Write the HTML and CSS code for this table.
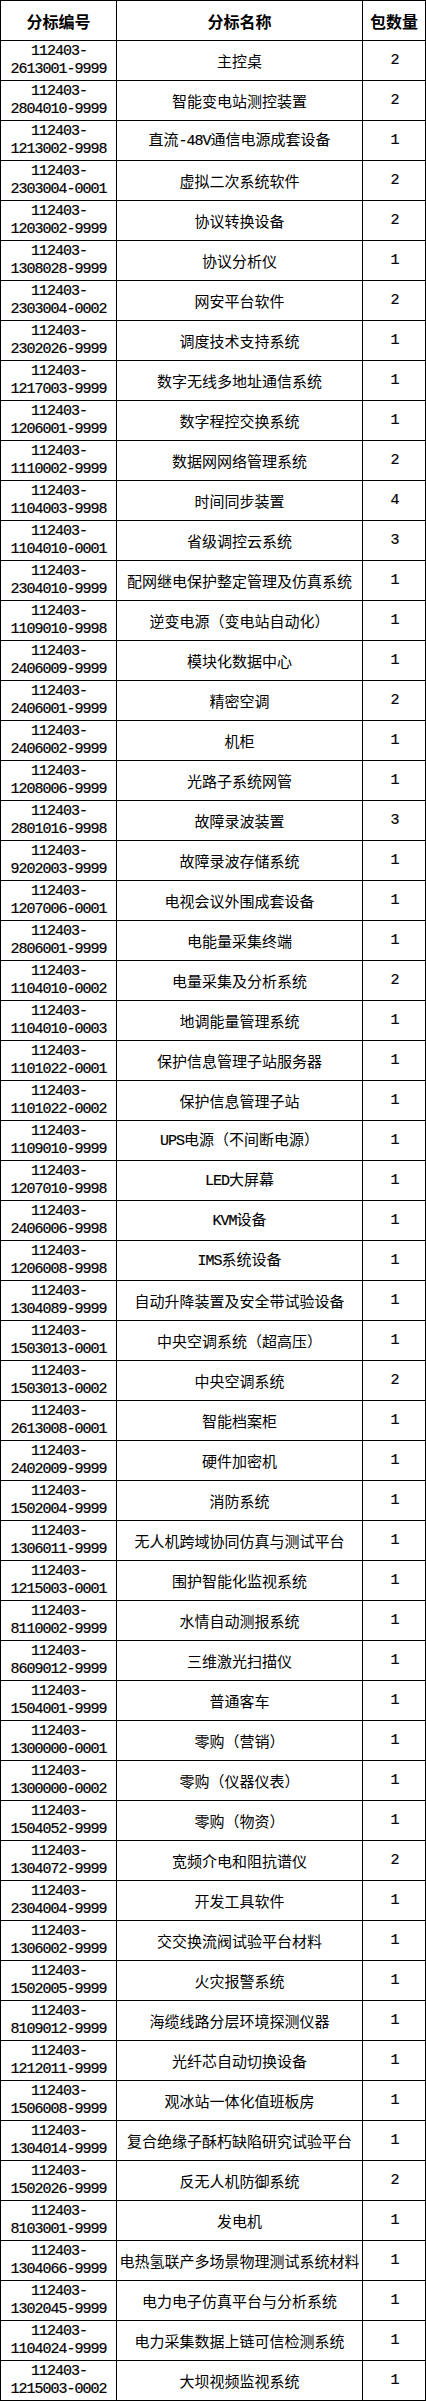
FILE: index.html
```html
<!DOCTYPE html>
<html lang="zh-CN">
<head>
<meta charset="utf-8">
<title>分标清单</title>
<link rel="stylesheet" href="styles.css">
</head>
<body>
<table class="lots">
<thead>
<tr><th class="c-code">分标编号</th><th class="c-name">分标名称</th><th class="c-qty">包数量</th></tr>
</thead>
<tbody>
<tr><td class="code">112403-<br>2613001-9999</td><td class="name">主控桌</td><td class="qty">2</td></tr>
<tr><td class="code">112403-<br>2804010-9999</td><td class="name">智能变电站测控装置</td><td class="qty">2</td></tr>
<tr><td class="code">112403-<br>1213002-9998</td><td class="name">直流<span class="en">-48V</span>通信电源成套设备</td><td class="qty">1</td></tr>
<tr><td class="code">112403-<br>2303004-0001</td><td class="name">虚拟二次系统软件</td><td class="qty">2</td></tr>
<tr><td class="code">112403-<br>1203002-9999</td><td class="name">协议转换设备</td><td class="qty">2</td></tr>
<tr><td class="code">112403-<br>1308028-9999</td><td class="name">协议分析仪</td><td class="qty">1</td></tr>
<tr><td class="code">112403-<br>2303004-0002</td><td class="name">网安平台软件</td><td class="qty">2</td></tr>
<tr><td class="code">112403-<br>2302026-9999</td><td class="name">调度技术支持系统</td><td class="qty">1</td></tr>
<tr><td class="code">112403-<br>1217003-9999</td><td class="name">数字无线多地址通信系统</td><td class="qty">1</td></tr>
<tr><td class="code">112403-<br>1206001-9999</td><td class="name">数字程控交换系统</td><td class="qty">1</td></tr>
<tr><td class="code">112403-<br>1110002-9999</td><td class="name">数据网网络管理系统</td><td class="qty">2</td></tr>
<tr><td class="code">112403-<br>1104003-9998</td><td class="name">时间同步装置</td><td class="qty">4</td></tr>
<tr><td class="code">112403-<br>1104010-0001</td><td class="name">省级调控云系统</td><td class="qty">3</td></tr>
<tr><td class="code">112403-<br>2304010-9999</td><td class="name">配网继电保护整定管理及仿真系统</td><td class="qty">1</td></tr>
<tr><td class="code">112403-<br>1109010-9998</td><td class="name">逆变电源（变电站自动化）</td><td class="qty">1</td></tr>
<tr><td class="code">112403-<br>2406009-9999</td><td class="name">模块化数据中心</td><td class="qty">1</td></tr>
<tr><td class="code">112403-<br>2406001-9999</td><td class="name">精密空调</td><td class="qty">2</td></tr>
<tr><td class="code">112403-<br>2406002-9999</td><td class="name">机柜</td><td class="qty">1</td></tr>
<tr><td class="code">112403-<br>1208006-9999</td><td class="name">光路子系统网管</td><td class="qty">1</td></tr>
<tr><td class="code">112403-<br>2801016-9998</td><td class="name">故障录波装置</td><td class="qty">3</td></tr>
<tr><td class="code">112403-<br>9202003-9999</td><td class="name">故障录波存储系统</td><td class="qty">1</td></tr>
<tr><td class="code">112403-<br>1207006-0001</td><td class="name">电视会议外围成套设备</td><td class="qty">1</td></tr>
<tr><td class="code">112403-<br>2806001-9999</td><td class="name">电能量采集终端</td><td class="qty">1</td></tr>
<tr><td class="code">112403-<br>1104010-0002</td><td class="name">电量采集及分析系统</td><td class="qty">2</td></tr>
<tr><td class="code">112403-<br>1104010-0003</td><td class="name">地调能量管理系统</td><td class="qty">1</td></tr>
<tr><td class="code">112403-<br>1101022-0001</td><td class="name">保护信息管理子站服务器</td><td class="qty">1</td></tr>
<tr><td class="code">112403-<br>1101022-0002</td><td class="name">保护信息管理子站</td><td class="qty">1</td></tr>
<tr><td class="code">112403-<br>1109010-9999</td><td class="name"><span class="en">UPS</span>电源（不间断电源）</td><td class="qty">1</td></tr>
<tr><td class="code">112403-<br>1207010-9998</td><td class="name"><span class="en">LED</span>大屏幕</td><td class="qty">1</td></tr>
<tr><td class="code">112403-<br>2406006-9998</td><td class="name"><span class="en">KVM</span>设备</td><td class="qty">1</td></tr>
<tr><td class="code">112403-<br>1206008-9998</td><td class="name"><span class="en">IMS</span>系统设备</td><td class="qty">1</td></tr>
<tr><td class="code">112403-<br>1304089-9999</td><td class="name">自动升降装置及安全带试验设备</td><td class="qty">1</td></tr>
<tr><td class="code">112403-<br>1503013-0001</td><td class="name">中央空调系统（超高压）</td><td class="qty">1</td></tr>
<tr><td class="code">112403-<br>1503013-0002</td><td class="name">中央空调系统</td><td class="qty">2</td></tr>
<tr><td class="code">112403-<br>2613008-0001</td><td class="name">智能档案柜</td><td class="qty">1</td></tr>
<tr><td class="code">112403-<br>2402009-9999</td><td class="name">硬件加密机</td><td class="qty">1</td></tr>
<tr><td class="code">112403-<br>1502004-9999</td><td class="name">消防系统</td><td class="qty">1</td></tr>
<tr><td class="code">112403-<br>1306011-9999</td><td class="name">无人机跨域协同仿真与测试平台</td><td class="qty">1</td></tr>
<tr><td class="code">112403-<br>1215003-0001</td><td class="name">围护智能化监视系统</td><td class="qty">1</td></tr>
<tr><td class="code">112403-<br>8110002-9999</td><td class="name">水情自动测报系统</td><td class="qty">1</td></tr>
<tr><td class="code">112403-<br>8609012-9999</td><td class="name">三维激光扫描仪</td><td class="qty">1</td></tr>
<tr><td class="code">112403-<br>1504001-9999</td><td class="name">普通客车</td><td class="qty">1</td></tr>
<tr><td class="code">112403-<br>1300000-0001</td><td class="name">零购（营销）</td><td class="qty">1</td></tr>
<tr><td class="code">112403-<br>1300000-0002</td><td class="name">零购（仪器仪表）</td><td class="qty">1</td></tr>
<tr><td class="code">112403-<br>1504052-9999</td><td class="name">零购（物资）</td><td class="qty">1</td></tr>
<tr><td class="code">112403-<br>1304072-9999</td><td class="name">宽频介电和阻抗谱仪</td><td class="qty">2</td></tr>
<tr><td class="code">112403-<br>2304004-9999</td><td class="name">开发工具软件</td><td class="qty">1</td></tr>
<tr><td class="code">112403-<br>1306002-9999</td><td class="name">交交换流阀试验平台材料</td><td class="qty">1</td></tr>
<tr><td class="code">112403-<br>1502005-9999</td><td class="name">火灾报警系统</td><td class="qty">1</td></tr>
<tr><td class="code">112403-<br>8109012-9999</td><td class="name">海缆线路分层环境探测仪器</td><td class="qty">1</td></tr>
<tr><td class="code">112403-<br>1212011-9999</td><td class="name">光纤芯自动切换设备</td><td class="qty">1</td></tr>
<tr><td class="code">112403-<br>1506008-9999</td><td class="name">观冰站一体化值班板房</td><td class="qty">1</td></tr>
<tr><td class="code">112403-<br>1304014-9999</td><td class="name">复合绝缘子酥朽缺陷研究试验平台</td><td class="qty">1</td></tr>
<tr><td class="code">112403-<br>1502026-9999</td><td class="name">反无人机防御系统</td><td class="qty">2</td></tr>
<tr><td class="code">112403-<br>8103001-9999</td><td class="name">发电机</td><td class="qty">1</td></tr>
<tr><td class="code">112403-<br>1304066-9999</td><td class="name">电热氢联产多场景物理测试系统材料</td><td class="qty">1</td></tr>
<tr><td class="code">112403-<br>1302045-9999</td><td class="name">电力电子仿真平台与分析系统</td><td class="qty">1</td></tr>
<tr><td class="code">112403-<br>1104024-9999</td><td class="name">电力采集数据上链可信检测系统</td><td class="qty">1</td></tr>
<tr><td class="code">112403-<br>1215003-0002</td><td class="name">大坝视频监视系统</td><td class="qty">1</td></tr>
</tbody>
</table>
</body>
</html>
```

FILE: styles.css
```css
html, body {
  margin: 0;
  padding: 0;
  background: #ffffff;
}

body {
  color: #000000;
  font-family: "Noto Sans CJK SC", "Noto Sans", sans-serif;
}

.lots {
  width: 426px;
  table-layout: fixed;
  border-collapse: separate;
  border-spacing: 0;
  border-top: 1px solid #000;
  border-left: 1px solid #000;
}

.lots tr {
  height: 40px;
}

.lots th,
.lots td {
  box-sizing: border-box;
  padding: 0;
  border-right: 1px solid #000;
  border-bottom: 1px solid #000;
  text-align: center;
  vertical-align: middle;
  white-space: nowrap;
  overflow: hidden;
}

.lots th {
  font-family: "Noto Sans CJK SC", sans-serif;
  font-size: 16px;
  font-weight: 700;
  line-height: 20px;
}

.c-code { width: 116px; }
.c-name { width: 246px; }
.c-qty  { width: 63px; }

.code,
.qty,
.en {
  font-family: "Liberation Mono", "DejaVu Sans Mono", monospace;
  font-size: 15px;
  letter-spacing: -1px;
  -webkit-text-stroke: 0.2px #000;
}

.code {
  line-height: 18px;
  text-indent: 1px;
}

.qty {
  line-height: 20px;
  text-indent: 1px;
}

.name {
  font-size: 15px;
  line-height: 20px;
}
```
